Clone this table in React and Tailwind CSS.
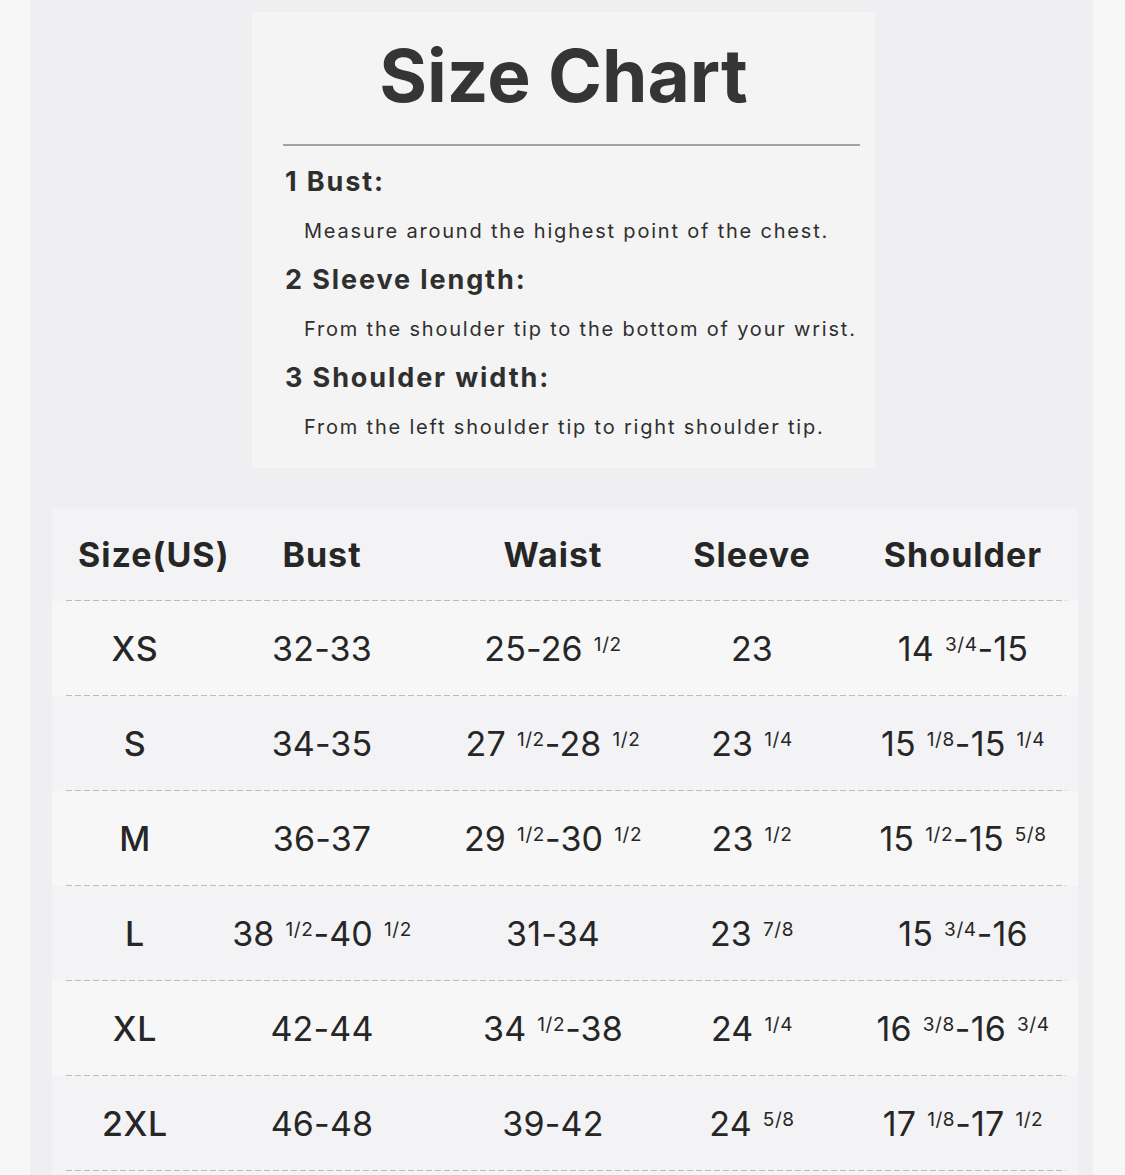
import React from 'react';

const rows = [
  { size: 'XS', bust: ['32-33'], waist: ['25-26', '1/2'], sleeve: ['23'], shoulder: ['14', '3/4', '-15'] },
  { size: 'S', bust: ['34-35'], waist: ['27', '1/2', '-28', '1/2'], sleeve: ['23', '1/4'], shoulder: ['15', '1/8', '-15', '1/4'] },
  { size: 'M', bust: ['36-37'], waist: ['29', '1/2', '-30', '1/2'], sleeve: ['23', '1/2'], shoulder: ['15', '1/2', '-15', '5/8'] },
  { size: 'L', bust: ['38', '1/2', '-40', '1/2'], waist: ['31-34'], sleeve: ['23', '7/8'], shoulder: ['15', '3/4', '-16'] },
  { size: 'XL', bust: ['42-44'], waist: ['34', '1/2', '-38'], sleeve: ['24', '1/4'], shoulder: ['16', '3/8', '-16', '3/4'] },
  { size: '2XL', bust: ['46-48'], waist: ['39-42'], sleeve: ['24', '5/8'], shoulder: ['17', '1/8', '-17', '1/2'] },
];

const notes = [
  { title: '1 Bust:', text: 'Measure around the highest point of the chest.' },
  { title: '2 Sleeve length:', text: 'From the shoulder tip to the bottom of your wrist.' },
  { title: '3 Shoulder width:', text: 'From the left shoulder tip to right shoulder tip.' },
];

// parts alternate: whole number, fraction, whole number, fraction...
const Value = ({ parts }) => (
  <span className="whitespace-nowrap tracking-[0.005em]">
    {parts.map((p, i) =>
      i % 2 === 1 ? (
        <span key={i} className="text-[19px] align-[10px] ml-[11px] tracking-[0.03em]">{p}</span>
      ) : (
        <span key={i}>{p}</span>
      )
    )}
  </span>
);

const cols = ['w-[138px]', 'w-[236px]', 'w-[226px]', 'w-[172px]', 'w-[228px] pl-[22px]'];

const Dashes = () => (
  <div className="h-px w-full bg-[repeating-linear-gradient(to_right,#bcbcbc_0_6px,transparent_6px_9px)]"></div>
);

export default function App() {
  return (
    <div className="min-h-[1175px] w-[1125px] bg-[#f7f7f7] flex overflow-hidden" style={{ fontFamily: 'Inter, "Noto Sans", sans-serif' }}>
      <div className="ml-[30px] w-[1063px] bg-[#efeff1] flex flex-col">
        <div className="mt-[12px] ml-[222px] w-[623px] h-[456px] bg-[#f4f4f4] flex flex-col text-[#2f2f2f]">
          <h1 className="mt-[24px] text-center text-[73px] leading-[80px] font-bold text-[#353535]">Size Chart</h1>
          <div className="mt-[28px] ml-[31px] w-[577px] h-[2px] bg-[#a3a3a3]"></div>
          <div className="mt-[12px] flex flex-col">
            {notes.map((n) => (
              <div key={n.title}>
                <p className="pl-[33px] text-[27px] leading-[48px] font-bold tracking-[0.07em]">{n.title}</p>
                <p className="pl-[52px] text-[20px] leading-[50px] tracking-[0.09em] whitespace-nowrap">{n.text}</p>
              </div>
            ))}
          </div>
        </div>

        <div className="mt-[40px] ml-[22px] w-[1026px] flex-1 bg-[#f4f4f5] text-[#262626]">
          <div className="h-[93px] bg-[#f3f3f5] pl-[14px] pr-[12px] flex flex-col">
            <div className="flex-1 flex items-center text-[34px] font-bold tracking-[0.03em]">
              <div className="w-[138px] pl-[12px] whitespace-nowrap">Size(US)</div>
              <div className="w-[236px] text-center">Bust</div>
              <div className="w-[226px] text-center">Waist</div>
              <div className="w-[172px] text-center">Sleeve</div>
              <div className="w-[228px] pl-[22px] text-center">Shoulder</div>
            </div>
            <Dashes />
          </div>
          {rows.map((r, idx) => (
            <div key={r.size} className={`h-[95px] pl-[14px] pr-[12px] flex flex-col ${idx % 2 === 0 ? 'bg-[#f7f7f7]' : 'bg-[#f3f3f5]'}`}>
              <div className="flex-1 flex items-center text-[34px]">
                <div className={`${cols[0]} text-center font-medium tracking-[0.02em]`}>{r.size}</div>
                <div className={`${cols[1]} text-center`}><Value parts={r.bust} /></div>
                <div className={`${cols[2]} text-center`}><Value parts={r.waist} /></div>
                <div className={`${cols[3]} text-center`}><Value parts={r.sleeve} /></div>
                <div className={`${cols[4]} text-center`}><Value parts={r.shoulder} /></div>
              </div>
              <Dashes />
            </div>
          ))}
        </div>
      </div>
    </div>
  );
}
